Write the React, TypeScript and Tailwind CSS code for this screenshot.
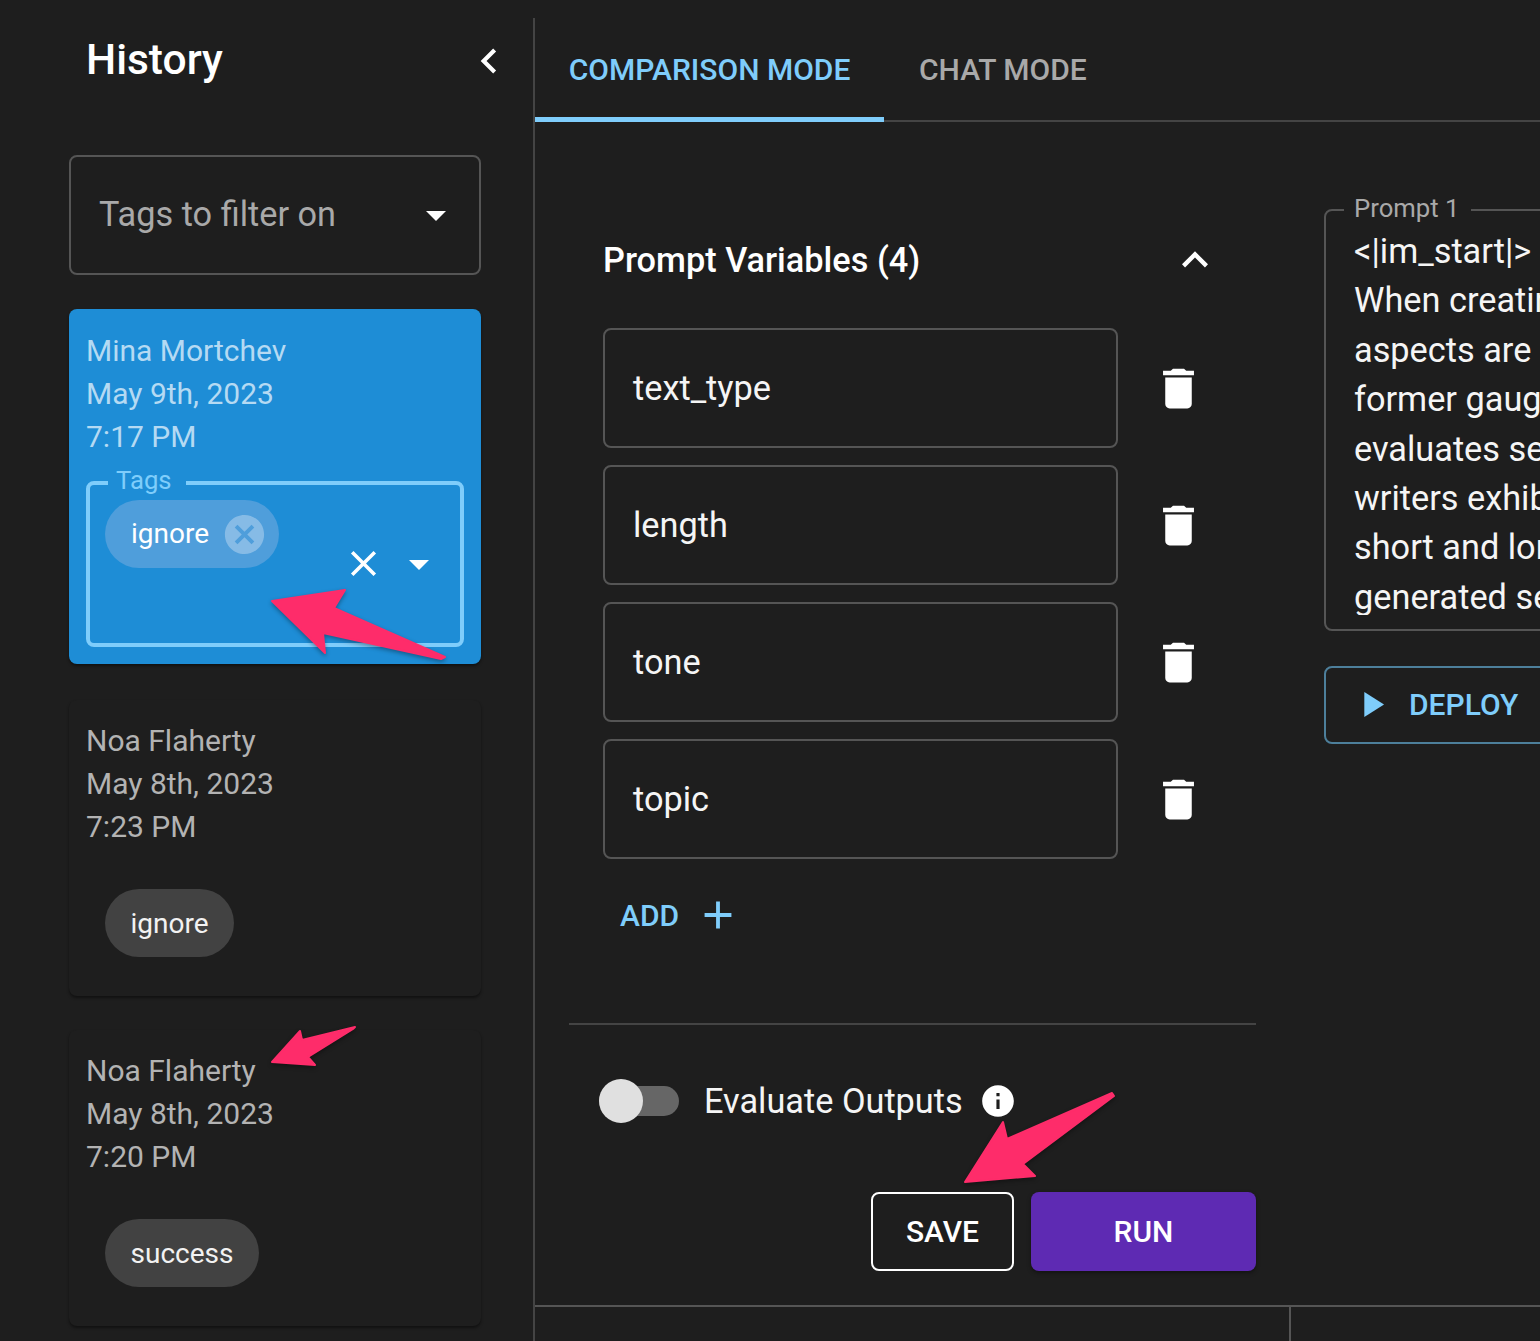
const roboto = "font-['Roboto',sans-serif]";

const ICONS = {
  trash: 'M6 19c0 1.1.9 2 2 2h8c1.1 0 2-.9 2-2V7H6v12zM19 4h-3.5l-1-1h-5l-1 1H5v2h14V4z',
  less: 'M12 8l-6 6 1.41 1.41L12 10.83l4.59 4.58L18 14z',
  left: 'M15.41 7.41 14 6l-6 6 6 6 1.41-1.41L10.83 12z',
  drop: 'M7 10l5 5 5-5z',
  close: 'M19 6.41 17.59 5 12 10.59 6.41 5 5 6.41 10.59 12 5 17.59 6.41 19 12 13.41 17.59 19 19 17.59 13.41 12z',
  cancel:
    'M12 2C6.47 2 2 6.47 2 12s4.47 10 10 10 10-4.47 10-10S17.53 2 12 2zm5 13.59L15.59 17 12 13.41 8.41 17 7 15.59 10.59 12 7 8.41 8.41 7 12 10.59 15.59 7 17 8.41 13.41 12 17 15.59z',
  info: 'M12 2C6.48 2 2 6.48 2 12s4.48 10 10 10 10-4.48 10-10S17.52 2 12 2zm1 15h-2v-6h2v6zm0-8h-2V7h2v2z',
  add: 'M19 13h-6v6h-2v-6H5v-2h6V5h2v6h6v2z',
  play: 'M8 5v14l11-7z',
};

function Icon({ d, className }: { d: string; className: string }) {
  return (
    <svg viewBox="0 0 24 24" fill="currentColor" className={`shrink-0 ${className}`}>
      <path d={d} />
    </svg>
  );
}

function HistoryCard({ name, date, time, tag }: { name: string; date: string; time: string; tag: string }) {
  return (
    <div className="h-[296px] rounded-lg bg-[#1e1e1e] px-[17px] pt-[20px] shadow-[0_2px_3px_rgba(0,0,0,0.45)]">
      <div className="text-[30px] leading-[42.8px] text-[#b3b3b3]">
        <div>{name}</div>
        <div>{date}</div>
        <div>{time}</div>
      </div>
      <div className="mt-[41px] ml-[19px] flex h-[68px] w-fit items-center rounded-full bg-[#424242] px-[25.5px] pt-[2px] text-[28px] text-[#f2f2f2]">
        {tag}
      </div>
    </div>
  );
}

function VariableRow({ name }: { name: string }) {
  return (
    <div className="flex items-center">
      <div className="flex h-[120px] w-[515px] items-center rounded-lg border-2 border-[#555555] pt-[2px] pl-[28px] text-[34.3px] text-[#f5f5f5]">
        {name}
      </div>
      <Icon d={ICONS.trash} className="ml-[34px] h-[53px] w-[53px] text-white" />
    </div>
  );
}

const PROMPT_LINES = [
  '<|im_start|>',
  'When creating',
  'aspects are',
  'former gaug',
  'evaluates se',
  'writers exhib',
  'short and lon',
  'generated se',
];

export default function App() {
  return (
    <div className={`relative flex h-[1341px] w-[1540px] overflow-hidden bg-[#1e1e1e] text-white ${roboto}`}>
      {/* History sidebar */}
      <aside className="mt-[18px] h-[1323px] w-[535px] shrink-0 border-r-2 border-[#444444] pr-[52px] pl-[69px]">
        <div className="flex h-[84px] items-center justify-between">
          <h1 className="pl-[17px] text-[42.5px] leading-none font-medium">History</h1>
          <Icon d={ICONS.left} className="mt-[2px] mr-[-33px] h-[50px] w-[50px] text-white" />
        </div>
        <div className="mt-[53px] flex h-[120px] items-center justify-between rounded-lg border-2 border-[#555555] pr-[19px] pl-[28px] text-[34.3px] text-[#a9a9a9]">
          <span>Tags to filter on</span>
          <Icon d={ICONS.drop} className="h-[48px] w-[48px] text-white" />
        </div>

        <div className="mt-[34px] h-[355px] rounded-lg bg-[#1e8dd6] px-[17px] pt-[21px] shadow-[0_2px_3px_rgba(0,0,0,0.45)]">
          <div className="text-[30px] leading-[42.8px] text-[#b5daf3]">
            <div>Mina Mortchev</div>
            <div>May 9th, 2023</div>
            <div>7:17 PM</div>
          </div>
          <div className="relative mt-[23px] h-[166px] rounded-lg border-[4px] border-[#7fcdfb]">
            <span className="absolute top-[-20px] left-[18px] bg-[#1e8dd6] pr-[14px] pl-[8px] text-[25.7px] leading-[30px] text-[#7fcdfb]">
              Tags
            </span>
            <div className="flex items-start pt-[15px] pl-[15px]">
              <div className="flex h-[68px] items-center rounded-full bg-[#4f9edb] pr-[11px] pl-[26px] text-[28px]">
                ignore
                <Icon d={ICONS.cancel} className="ml-[12px] h-[47px] w-[47px] text-[#86bbe6]" />
              </div>
            </div>
            <Icon d={ICONS.close} className="absolute top-[57px] right-[75px] h-[43px] w-[43px] text-white" />
            <Icon d={ICONS.drop} className="absolute top-[55px] right-[17px] h-[48px] w-[48px] text-white" />
          </div>
        </div>

        <div className="mt-[36px] flex flex-col gap-[34px]">
          <HistoryCard name="Noa Flaherty" date="May 8th, 2023" time="7:23 PM" tag="ignore" />
          <HistoryCard name="Noa Flaherty" date="May 8th, 2023" time="7:20 PM" tag="success" />
        </div>
      </aside>

      {/* Main pane */}
      <main className="min-w-0 flex-1">
        <div className="flex h-[122px] border-b-2 border-[#444444] text-[30px] leading-none font-medium">
          <div className="flex h-[122px] w-[349px] items-center justify-center border-b-[5px] border-[#7fcdfb] pt-[22px] text-[#7fcdfb]">
            COMPARISON MODE
          </div>
          <div className="flex h-[120px] items-center pt-[20px] pl-[35px] text-[#a9a9a9]">CHAT MODE</div>
        </div>

        <div className="flex h-[1185px] border-b-2 border-[#555555]">
          <div className="w-[755px] shrink-0 pt-[106px]">
            <div className="flex items-center justify-between pr-[69px] pl-[68px]">
              <h2 className="text-[34.3px] leading-[64px] font-medium">Prompt Variables (4)</h2>
              <Icon d={ICONS.less} className="h-[52px] w-[52px] text-white" />
            </div>
            <div className="mt-[36px] flex flex-col gap-[17px] pl-[68px]">
              <VariableRow name="text_type" />
              <VariableRow name="length" />
              <VariableRow name="tone" />
              <VariableRow name="topic" />
            </div>
            <div className="mt-[33px] flex items-center pl-[85px] text-[30px] font-medium text-[#7fcdfb]">
              ADD
              <Icon d={ICONS.add} className="ml-[16px] h-[46px] w-[46px]" />
            </div>
            <div className="mt-[85px] ml-[34px] w-[687px] border-t-2 border-[#444444]" />
            <div className="mt-[49px] flex items-center pl-[64px]">
              <div className="relative h-[30px] w-[80px] rounded-full bg-[#666666]">
                <div className="absolute top-[-7px] left-0 h-[44px] w-[44px] rounded-full bg-[#e0e0e0]" />
              </div>
              <span className="ml-[25px] pt-[2px] text-[34.3px] text-[#f5f5f5]">Evaluate Outputs</span>
              <Icon d={ICONS.info} className="ml-[16px] h-[38px] w-[38px] text-white" />
            </div>
            <div className="mt-[65px] flex justify-end gap-[17px] pr-[34px] text-[30px] leading-none font-medium">
              <div className="flex h-[79px] w-[143px] items-center justify-center rounded-lg border-2 border-white">SAVE</div>
              <div className="flex h-[79px] w-[225px] items-center justify-center rounded-lg bg-[#5e2ab3] shadow-[0_2px_4px_rgba(0,0,0,0.4)]">RUN</div>
            </div>
          </div>

          <div className="w-[250px] shrink-0 pt-[87px] pl-[34px]">
            <div className="relative h-[422px] w-[300px] rounded-lg border-2 border-[#555555] pt-[16px] pl-[28px]">
              <span className="absolute top-[-18px] left-[18px] bg-[#1e1e1e] pr-[12px] pl-[10px] text-[25.7px] leading-[30px] text-[#a9a9a9]">
                Prompt 1
              </span>
              <div className="h-[388px] overflow-hidden text-[34.3px] leading-[49.4px] whitespace-nowrap text-[#f5f5f5]">
                {PROMPT_LINES.map((line) => (
                  <div key={line}>{line}</div>
                ))}
              </div>
            </div>
            <div className="mt-[35px] flex h-[78px] w-[300px] items-center rounded-lg border-2 border-[#4d7f9b] pb-[2px] pl-[24px] text-[30px] font-medium text-[#7fcdfb]">
              <Icon d={ICONS.play} className="h-[43px] w-[43px]" />
              <span className="ml-[16px]">DEPLOY</span>
            </div>
          </div>
        </div>

        <div className="ml-[754px] h-[35px] w-0 border-l-2 border-[#555555]" />
      </main>

      {/* Annotation arrows drawn on top of the screenshot */}
      <svg viewBox="0 0 1540 1341" className="pointer-events-none absolute inset-0 h-[1341px] w-[1540px] drop-shadow-[0_2px_2px_rgba(0,0,0,0.35)]">
        <g fill="#fe2c6a" stroke="#fe2c6a" strokeWidth="2" strokeLinejoin="round">
          <polygon points="272,601 345,590 334,608 445,657 441,659 323,633 325,653" />
          <polygon points="272,1062 300,1031 302,1040 355,1027 353,1029 308,1057 315,1065" />
          <polygon points="965,1182 1003,1122 1007,1139 1112,1093 1114,1096 1023,1164 1035,1176" />
        </g>
      </svg>
    </div>
  );
}
